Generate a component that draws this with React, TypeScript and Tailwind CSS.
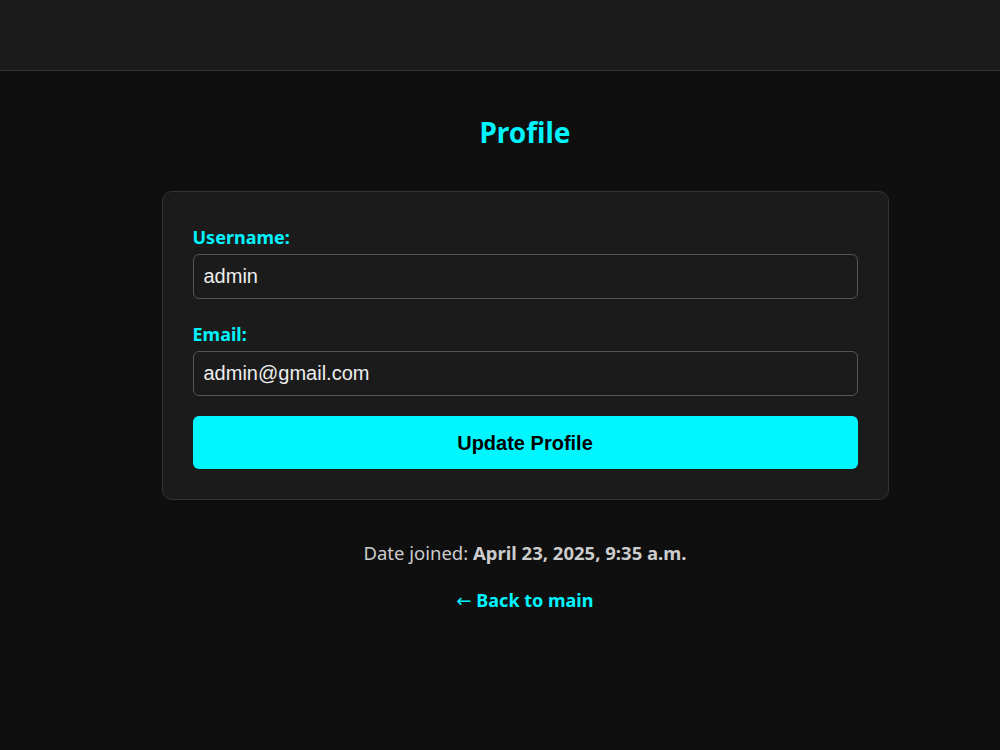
export default function App() {
  const cyan = "text-[#00f5ff]";

  return (
    <div className="min-h-[750px] bg-[#0f0f0f] font-['Segoe_UI','Noto_Sans','Open_Sans',sans-serif]">
      {/* top bar */}
      <header className="h-[71px] bg-[#1b1b1b] border-b border-[#333]" />

      <main className="flex flex-col items-center pl-[50px]">
        <h1 className={`mt-[43px] text-[28px] font-bold leading-[36px] ${cyan}`}>Profile</h1>

        <form
          className="mt-[41px] w-[727px] rounded-[10px] border border-[#333] bg-[#1b1b1b] px-[30px] pt-[33px] pb-[30px]"
          onSubmit={(e) => e.preventDefault()}
        >
          <label className={`block text-[18px] font-bold leading-[24px] ${cyan}`}>Username:</label>
          <input
            type="text"
            defaultValue="admin"
            className="mt-[5px] block h-[45px] w-full rounded-[6px] border border-[#555] bg-[#1b1b1b] px-[10px] text-[20px] text-[#eee] font-['Liberation_Sans',Arial,sans-serif] outline-none"
          />

          <label className={`mt-[23px] block text-[18px] font-bold leading-[24px] ${cyan}`}>Email:</label>
          <input
            type="email"
            defaultValue="admin@gmail.com"
            className="mt-[5px] block h-[45px] w-full rounded-[6px] border border-[#555] bg-[#1b1b1b] px-[10px] text-[20px] text-[#eee] font-['Liberation_Sans',Arial,sans-serif] outline-none"
          />

          <button
            type="submit"
            className="mt-[20px] block h-[53px] w-full rounded-[6px] bg-[#00f7ff] text-[20px] font-bold text-black font-['Liberation_Sans',Arial,sans-serif]"
          >
            Update Profile
          </button>
        </form>

        <p className="mt-[41px] text-[18.5px] leading-[24px] text-[#ccc]">
          Date joined: <strong>April 23, 2025, 9:35 a.m.</strong>
        </p>

        <a href="#" className={`mt-[23px] text-[18px] font-bold leading-[24px] ${cyan}`}>
          <span className="font-['DejaVu_Sans',sans-serif] font-normal">←</span> Back to main
        </a>
      </main>
    </div>
  );
}
